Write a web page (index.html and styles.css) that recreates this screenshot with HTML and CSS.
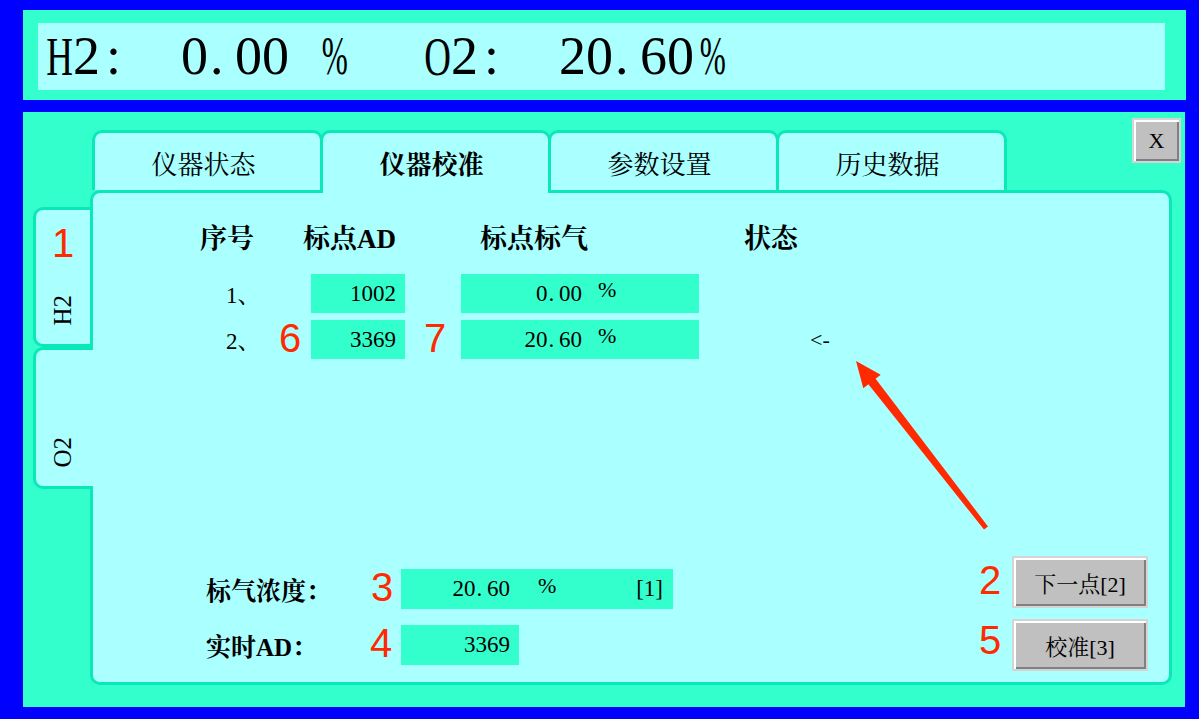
FILE: index.html
```html
<!DOCTYPE html>
<html lang="zh-CN">
<head>
<meta charset="utf-8">
<title>仪器校准</title>
<link rel="stylesheet" href="styles.css">
</head>
<body>
<div class="header">
  <div class="readout"><span class="c n">H</span><span class="c">2</span><span class="c">:</span><span class="c"></span><span class="c"></span><span class="c">0</span><span class="c dot">.</span><span class="c">0</span><span class="c">0</span><span class="c"></span><span class="c p">%</span><span class="c"></span><span class="c"></span><span class="c"></span><span class="c n">O</span><span class="c">2</span><span class="c">:</span><span class="c"></span><span class="c"></span><span class="c">2</span><span class="c">0</span><span class="c dot">.</span><span class="c">6</span><span class="c">0</span><span class="c p">%</span></div>
</div>

<div class="main">
  <button class="close">X</button>

  <div class="tabs">
    <div class="tab">仪器状态</div>
    <div class="tab active">仪器校准</div>
    <div class="tab">参数设置</div>
    <div class="tab">历史数据</div>
  </div>

  <div class="vtabs">
    <div class="vtab"><span class="vlabel">H2</span></div>
    <div class="vtab active"><span class="vlabel">O2</span></div>
  </div>

  <div class="panel">
    <div class="thead">
      <span class="th th-no">序号</span>
      <span class="th th-ad">标点AD</span>
      <span class="th th-gas">标点标气</span>
      <span class="th">状态</span>
    </div>

    <div class="rows">
      <span class="idx">1、</span>
      <span class="fld ad">1002</span>
      <span></span>
      <span class="fld gas"><span class="val">0<span class="pt">.</span>00</span><span class="pct">%</span></span>
      <span class="status"></span>

      <span class="idx">2、</span>
      <span class="fld ad">3369</span>
      <span></span>
      <span class="fld gas"><span class="val">20<span class="pt">.</span>60</span><span class="pct">%</span></span>
      <span class="status">&lt;-</span>
    </div>

    <div class="bottom">
      <div class="form">
        <span class="lbl">标气浓度：</span>
        <span class="fld conc"><span class="val">20<span class="pt">.</span>60</span><span class="pct">%</span><span class="br">[1]</span></span>
        <span class="lbl">实时AD：</span>
        <span class="fld rt">3369</span>
      </div>
      <div class="btns">
        <button class="btn">下一点[2]</button>
        <button class="btn">校准[3]</button>
      </div>
    </div>
  </div>
</div>

<div class="annot">
  <svg class="arrow" width="1199" height="719" viewBox="0 0 1199 719">
    <polygon fill="#FF2A00" points="856,361 880.7,374.8 875.6,378.7 988,526.5 984,529.5 868.4,384.3 863.3,388.3"/>
  </svg>
  <span class="num n1">1</span>
  <span class="num n6">6</span>
  <span class="num n7">7</span>
  <span class="num n3">3</span>
  <span class="num n4">4</span>
  <span class="num n2">2</span>
  <span class="num n5">5</span>
</div>
</body>
</html>
```

FILE: styles.css
```css
* { box-sizing: border-box; }

html, body {
  margin: 0;
  background: #0000FF;
}

body {
  width: 1199px;
  height: 719px;
  overflow: hidden;
  position: relative;
  padding: 10px 0 0 23px;
  font-family: "Liberation Serif", "Noto Serif CJK SC", "Noto Sans CJK SC", serif;
  color: #000;
}

/* ---------- top readout ---------- */
.header {
  margin-right: 13px;
  background: #33FFCC;
  padding: 13px 21px 10px 15px;
}

.readout {
  height: 67px;
  background: #AAFFFF;
  padding-left: 8px;
  display: flex;
  font-size: 54px;
  line-height: 67px;
  white-space: nowrap;
}

.c {
  display: inline-block;
  width: 27px;
  text-align: center;
  flex: none;
}
.c.n { font-size: 37px; transform: scaleY(1.46); }
.c.p { transform: scaleX(0.58); }
.c.dot { text-align: left; padding-left: 2px; }

/* ---------- main area ---------- */
.main {
  position: relative;
  margin: 12px 14px 0 0;
  height: 595px;
  background: #33FFCC;
  padding: 18px 13px 22px 10px;
  display: grid;
  grid-template-columns: 57px 1fr;
  grid-template-rows: 60px 1fr;
}

.close {
  position: absolute;
  top: 6px;
  right: 4px;
  width: 49px;
  height: 45px;
  padding: 0;
  background: #C0C0C0;
  border: 2px solid #D4D4D4;
  box-shadow: inset 2px 2px 0 #FFFFFF, inset -2px -2px 0 #808080;
  font-family: "Liberation Serif", serif;
  font-size: 22px;
  color: #000;
}

/* top tabs */
.tabs {
  grid-column: 2;
  grid-row: 1;
  display: flex;
  align-items: flex-end;
  padding-left: 2px;
}

.tab {
  width: 231px;
  height: 60px;
  background: #AAFFFF;
  border: 3px solid #0BE8B8;
  border-bottom: 0;
  border-radius: 10px 10px 0 0;
  display: flex;
  align-items: center;
  justify-content: center;
  font-size: 26px;
  padding: 2px 8px 0 0;
}
.tab + .tab { margin-left: -3px; }
.tab.active {
  height: 63px;
  margin-bottom: -3px;
  z-index: 2;
  font-weight: bold;
  padding-bottom: 3px;
}

/* left vertical tabs */
.vtabs {
  grid-column: 1;
  grid-row: 2;
  display: flex;
  flex-direction: column;
  padding-top: 17px;
}

.vtab {
  height: 140px;
  background: #AAFFFF;
  border: 3px solid #0BE8B8;
  border-right: 0;
  border-radius: 10px 0 0 10px;
  display: flex;
  flex-direction: column;
  align-items: center;
  justify-content: flex-end;
  padding-bottom: 18px;
}
.vtab.active {
  height: 142px;
  margin-right: -3px;
  z-index: 2;
  padding-right: 3px;
}

.vlabel {
  writing-mode: vertical-rl;
  transform: rotate(180deg);
  font-size: 25px;
  line-height: 26px;
}

/* panel */
.panel {
  grid-column: 2;
  grid-row: 2;
  background: #AAFFFF;
  border: 3px solid #0BE8B8;
  border-radius: 10px;
  display: flex;
  flex-direction: column;
}

.thead {
  margin-top: 30px;
  padding-left: 107px;
  display: flex;
  font-size: 27px;
  line-height: 32px;
  font-weight: bold;
  white-space: nowrap;
}
.th-no { width: 103px; }
.th-ad { width: 177px; }
.th-gas { width: 264px; }

.rows {
  margin-top: 19px;
  padding-left: 107px;
  display: grid;
  grid-template-columns: 111px 94px 56px 238px auto;
  grid-auto-rows: 39px;
  row-gap: 7px;
}

.idx {
  padding-left: 26px;
  font-size: 23px;
  align-self: center;
}

.fld {
  background: #33FFCC;
  display: flex;
  align-items: center;
  font-size: 23px;
  white-space: nowrap;
}

.ad {
  justify-content: flex-end;
  padding-right: 9px;
}

.val {
  display: inline-block;
  text-align: right;
}
.gas .val { width: 121px; }

.pt {
  display: inline-block;
  width: 0.5em;
  text-align: left;
  padding-left: 1px;
}

.pct {
  font-size: 22px;
  margin-bottom: 7px;
}
.gas .pct { margin-left: 16px; }

.status {
  padding-left: 111px;
  align-self: center;
  font-size: 22px;
}

/* bottom section */
.bottom {
  margin-top: auto;
  display: flex;
  justify-content: space-between;
  align-items: flex-end;
}

.form {
  margin: 0 0 17px 113px;
  display: grid;
  grid-template-columns: 195px auto;
  grid-auto-rows: 40px;
  row-gap: 16px;
}

.lbl {
  align-self: center;
  font-size: 25px;
  font-weight: bold;
  white-space: nowrap;
}

.conc { width: 272px; }
.conc .val { width: 109px; }
.conc .pct { margin-left: 28px; }
.conc .br { margin-left: auto; padding-right: 10px; }

.rt {
  width: 118px;
  justify-content: flex-end;
  padding-right: 9px;
}

.btns {
  display: flex;
  flex-direction: column;
  gap: 11px;
  margin: 0 21px 11px 0;
}

.btn {
  width: 136px;
  height: 52px;
  padding: 0;
  background: #C0C0C0;
  border: 2px solid #D4D4D4;
  box-shadow: inset 2px 2px 0 #FFFFFF, inset -2px -2px 0 #808080;
  font-family: "Liberation Serif", "Noto Serif CJK SC", "Noto Sans CJK SC", serif;
  font-size: 22px;
  color: #000;
}

/* ---------- annotation overlay ---------- */
.annot {
  position: absolute;
  left: 0;
  top: 0;
  width: 1199px;
  height: 719px;
  pointer-events: none;
}

.arrow {
  position: absolute;
  left: 0;
  top: 0;
}

.num {
  position: absolute;
  font-family: "Liberation Sans", sans-serif;
  font-size: 40px;
  line-height: 40px;
  color: #FF2A00;
}
.n1 { left: 52px; top: 223px; }
.n6 { left: 279px; top: 318px; }
.n7 { left: 424px; top: 318px; }
.n3 { left: 371px; top: 567px; }
.n4 { left: 370px; top: 623px; }
.n2 { left: 979px; top: 560px; }
.n5 { left: 979px; top: 620px; }
```
